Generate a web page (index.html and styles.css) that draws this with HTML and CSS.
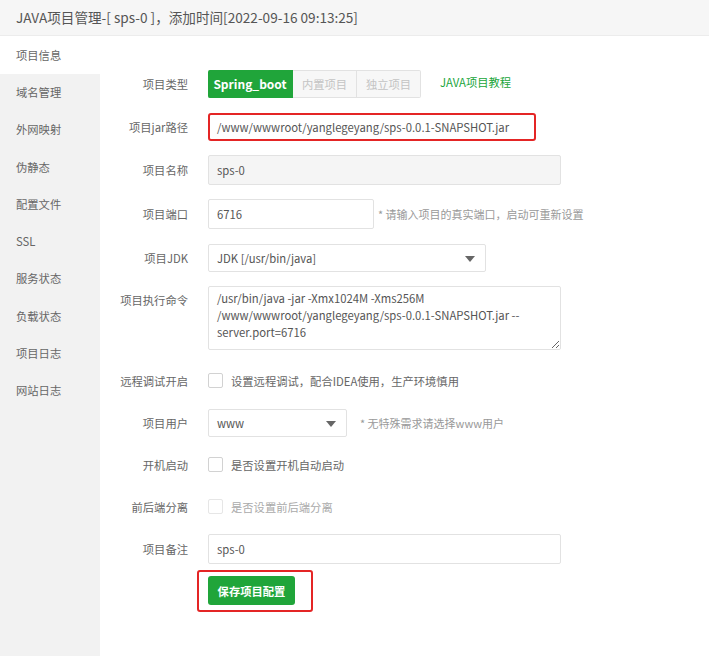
FILE: index.html
```html
<!DOCTYPE html>
<html lang="zh-CN">
<head>
<meta charset="utf-8">
<title>JAVA项目管理</title>
<link rel="stylesheet" href="styles.css">
</head>
<body>
<div class="header">JAVA项目管理-[ sps-0 ]，添加时间[2022-09-16 09:13:25]</div>
<div class="layout">
  <ul class="sidebar">
    <li class="active">项目信息</li>
    <li>域名管理</li>
    <li>外网映射</li>
    <li>伪静态</li>
    <li>配置文件</li>
    <li>SSL</li>
    <li>服务状态</li>
    <li>负载状态</li>
    <li>项目日志</li>
    <li>网站日志</li>
  </ul>
  <div class="main">
    <div class="row">
      <label class="label">项目类型</label>
      <div class="btn-group">
        <span class="seg seg-on">Spring_boot</span>
        <span class="seg">内置项目</span>
        <span class="seg">独立项目</span>
      </div>
      <a class="link">JAVA项目教程</a>
    </div>
    <div class="row">
      <label class="label">项目jar路径</label>
      <div class="input input-mark">/www/wwwroot/yanglegeyang/sps-0.0.1-SNAPSHOT.jar</div>
    </div>
    <div class="row">
      <label class="label">项目名称</label>
      <div class="input input-wide input-ro">sps-0</div>
    </div>
    <div class="row">
      <label class="label">项目端口</label>
      <div class="input input-port">6716</div>
      <span class="hint">* 请输入项目的真实端口，启动可重新设置</span>
    </div>
    <div class="row">
      <label class="label">项目JDK</label>
      <div class="select select-jdk">JDK [/usr/bin/java]<i class="caret"></i></div>
    </div>
    <div class="row row-top">
      <label class="label">项目执行命令</label>
      <textarea class="textarea" readonly>/usr/bin/java -jar -Xmx1024M -Xms256M /www/wwwroot/yanglegeyang/sps-0.0.1-SNAPSHOT.jar --server.port=6716</textarea>
    </div>
    <div class="row row-low">
      <label class="label">远程调试开启</label>
      <span class="check"></span>
      <span class="check-text">设置远程调试，配合IDEA使用，生产环境慎用</span>
    </div>
    <div class="row row-low">
      <label class="label">项目用户</label>
      <div class="select select-user">www<i class="caret"></i></div>
      <span class="hint hint-user">* 无特殊需求请选择www用户</span>
    </div>
    <div class="row row-low">
      <label class="label">开机启动</label>
      <span class="check"></span>
      <span class="check-text">是否设置开机自动启动</span>
    </div>
    <div class="row row-low">
      <label class="label">前后端分离</label>
      <span class="check check-off"></span>
      <span class="check-text check-text-off">是否设置前后端分离</span>
    </div>
    <div class="row row-low">
      <label class="label">项目备注</label>
      <div class="input input-wide">sps-0</div>
    </div>
    <div class="row row-btn">
      <button class="save">保存项目配置</button>
    </div>
  </div>
</div>
</body>
</html>
```
FILE: styles.css
```css
* { box-sizing: border-box; }
html, body { margin: 0; padding: 0; }
body {
  font-family: "Noto Sans CJK SC", "Noto Sans", sans-serif;
  color: #666;
  background: #fff;
  font-size: 11.3px;
}
.header {
  height: 36px;
  line-height: 35px;
  padding-left: 16px;
  font-size: 13.6px;
  color: #555;
  background: #f6f6f6;
  border-bottom: 1px solid #ececec;
}
.layout {
  display: flex;
  min-height: 620px;
}
.sidebar {
  list-style: none;
  margin: 0;
  padding: 0;
  width: 100px;
  background: #f2f2f2;
  flex-shrink: 0;
}
.sidebar li {
  height: 37.25px;
  line-height: 37.25px;
  padding-left: 16px;
  font-size: 11.3px;
  color: #666;
}
.sidebar li.active {
  background: #fff;
  height: 38px;
  line-height: 38px;
}
.main {
  flex: 1;
  padding-top: 33px;
}
.row {
  display: flex;
  align-items: center;
  min-height: 29px;
  margin-bottom: 14px;
}
.row-top { align-items: flex-start; margin-bottom: 16px; }
.row-top .label { padding-top: 6px; }
.row-low { margin-bottom: 13px; }
.label {
  width: 88px;
  text-align: right;
  margin-right: 20px;
  font-size: 11.3px;
  color: #666;
  flex-shrink: 0;
}
.btn-group {
  display: flex;
  height: 28px;
}
.seg {
  display: flex;
  align-items: center;
  justify-content: center;
  width: 64px;
  height: 28px;
  border: 1px solid #e2e2e2;
  border-left: none;
  background: #f7f7f7;
  color: #c4c4c4;
  font-size: 11.3px;
}
.seg:last-child { border-radius: 0 2px 2px 0; }
.seg-on {
  width: 85px;
  background: #20a53a;
  border-color: #20a53a;
  color: #fff;
  font-size: 12px;
  font-weight: bold;
  border-radius: 2px 0 0 2px;
}
.link {
  margin-left: 19px;
  margin-top: -3px;
  color: #20a53a;
  font-size: 11.3px;
}
.input {
  height: 30px;
  line-height: 28px;
  border: 1px solid #e2e2e2;
  border-radius: 2px;
  padding-left: 8px;
  font-size: 11.3px;
  color: #555;
  background: #fff;
}
.input-mark {
  width: 328px;
  height: 28px;
  line-height: 24px;
  border: 2px solid #e42525;
  border-radius: 3px;
  padding-left: 7px;
}
.input-wide { width: 353px; }
.input-ro { background: #f5f5f5; }
.input-port { width: 166px; }
.hint {
  margin-left: 4px;
  font-size: 11px;
  color: #999;
}
.hint-user { margin-left: 13px; }
.select {
  position: relative;
  height: 28px;
  line-height: 26px;
  border: 1px solid #e2e2e2;
  border-radius: 2px;
  padding-left: 8px;
  font-size: 11.3px;
  color: #555;
}
.select-jdk { width: 278px; }
.select-user { width: 139px; }
.caret {
  position: absolute;
  right: 10px;
  top: 11px;
  width: 0;
  height: 0;
  border-left: 5px solid transparent;
  border-right: 5px solid transparent;
  border-top: 6px solid #666;
}
.textarea {
  width: 353px;
  height: 64px;
  border: 1px solid #e2e2e2;
  border-radius: 2px;
  padding: 3px 8px;
  font-family: inherit;
  font-size: 11.3px;
  line-height: 17px;
  color: #555;
  resize: both;
  outline: none;
}
.check {
  width: 15px;
  height: 15px;
  border: 1px solid #d2d2d2;
  border-radius: 2px;
  background: #fff;
  margin-right: 8px;
}
.check-off { border-color: #e6e6e6; }
.check-text { font-size: 11.3px; color: #666; }
.check-text-off { color: #aaa; }
.row-btn { padding-left: 108px; margin-top: -1px; }
.save {
  position: relative;
  width: 87px;
  height: 29px;
  border: none;
  border-radius: 3px;
  background: #20a53a;
  color: #fff;
  font-family: inherit;
  font-size: 11.3px;
  font-weight: bold;
  padding: 0;
}
.save::after {
  content: "";
  position: absolute;
  top: -6px;
  left: -11px;
  right: -18px;
  bottom: -7px;
  border: 2px solid #e42525;
  border-radius: 3px;
}
```
